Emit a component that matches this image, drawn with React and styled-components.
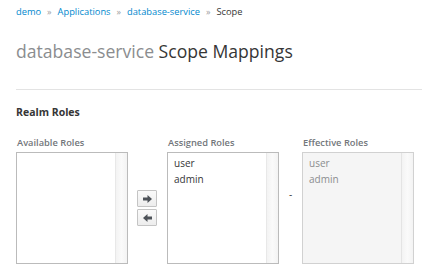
import styled, { createGlobalStyle } from 'styled-components';

const GlobalStyle = createGlobalStyle`
  body {
    margin: 0;
    background: #fff;
    font-family: 'Open Sans', 'Noto Sans', sans-serif;
    color: #363636;
  }
`;

const Page = styled.div`
  padding-left: 16px;
`;

const Breadcrumb = styled.ol`
  display: flex;
  align-items: center;
  list-style: none;
  margin: 0;
  padding: 5px 0 0;
  font-size: 9.3px;
  line-height: 13px;
`;

const Crumb = styled.li`
  color: ${(p) => (p.$active ? '#363636' : '#0088ce')};
`;

const Sep = styled.li`
  color: #a0a0a0;
  font-size: 9px;
  padding: 0 6px;
`;

const Title = styled.h1`
  margin: 22px 0 0;
  font-size: 17.6px;
  font-weight: 400;
  line-height: 22px;
  color: #363636;

  span {
    color: #8b8d8f;
  }
`;

const Rule = styled.hr`
  margin: 27px 0 0;
  border: 0;
  border-top: 1px solid #e3e3e3;
`;

const Section = styled.h3`
  margin: 15px 0 0;
  font-size: 10.5px;
  font-weight: 700;
  line-height: 14px;
  color: #363636;
`;

const Row = styled.div`
  display: flex;
  align-items: flex-start;
  margin-top: 18px;
`;

const Column = styled.div`
  display: flex;
  flex-direction: column;
  width: 112px;
`;

const Label = styled.label`
  font-size: 9.3px;
  font-weight: 600;
  line-height: 12px;
  color: #72767b;
  padding-left: 1px;
  margin-bottom: 3px;
`;

const ListBox = styled.div`
  display: flex;
  height: 112px;
  box-sizing: border-box;
  border: 1px solid ${(p) => (p.$readonly ? '#d1d1d1' : '#bbb')};
  background: ${(p) => (p.$readonly ? '#f5f5f5' : '#fff')};
`;

const Options = styled.ul`
  flex: 1;
  list-style: none;
  margin: 0;
  padding: 2px 0 0 6px;
  font-size: 10px;
  line-height: 16px;
  color: ${(p) => (p.$readonly ? '#8b8d8f' : '#363636')};
`;

const Track = styled.div`
  width: 11px;
  border-left: 1px solid ${(p) => (p.$readonly ? '#e4e4e4' : '#e8e8e8')};
  background: linear-gradient(to right, #f3f3f3, #fafafa 50%, #f3f3f3);
`;

const Buttons = styled.div`
  display: flex;
  flex-direction: column;
  gap: 2px;
  margin: 53px 10px 0 9px;
`;

const MoveButton = styled.button`
  display: flex;
  align-items: center;
  justify-content: center;
  width: 20px;
  height: 17px;
  padding: 0;
  border: 1px solid #c4c4c4;
  border-radius: 1px;
  background: linear-gradient(to bottom, #fafafa, #ededed);
  cursor: pointer;
`;

const Dash = styled.div`
  width: 23px;
  margin-top: 50px;
  padding-left: 10px;
  box-sizing: border-box;
  font-size: 10px;
  color: #363636;
`;

const Arrow = ({ left }) => (
  <svg width="9" height="8" viewBox="0 0 9 8">
    <path
      d="M0 2.5h4.5V0L9 4 4.5 8V5.5H0z"
      fill="#4d5258"
      transform={left ? 'matrix(-1 0 0 1 9 0)' : undefined}
    />
  </svg>
);

const RoleList = ({ roles, readonly }) => (
  <ListBox $readonly={readonly}>
    <Options $readonly={readonly}>
      {roles.map((r) => (
        <li key={r}>{r}</li>
      ))}
    </Options>
    <Track $readonly={readonly} />
  </ListBox>
);

const App = () => {
  const crumbs = ['demo', 'Applications', 'database-service'];

  return (
    <Page>
      <GlobalStyle />
      <Breadcrumb>
        {crumbs.map((c) => [
          <Crumb key={c}>{c}</Crumb>,
          <Sep key={c + '-sep'}>»</Sep>,
        ])}
        <Crumb $active>Scope</Crumb>
      </Breadcrumb>
      <Title>
        <span>database-service</span> Scope Mappings
      </Title>
      <Rule />
      <Section>Realm Roles</Section>
      <Row>
        <Column>
          <Label>Available Roles</Label>
          <RoleList roles={[]} />
        </Column>
        <Buttons>
          <MoveButton type="button">
            <Arrow />
          </MoveButton>
          <MoveButton type="button">
            <Arrow left />
          </MoveButton>
        </Buttons>
        <Column>
          <Label>Assigned Roles</Label>
          <RoleList roles={['user', 'admin']} />
        </Column>
        <Dash>-</Dash>
        <Column>
          <Label>Effective Roles</Label>
          <RoleList roles={['user', 'admin']} readonly />
        </Column>
      </Row>
    </Page>
  );
};

export default App;
